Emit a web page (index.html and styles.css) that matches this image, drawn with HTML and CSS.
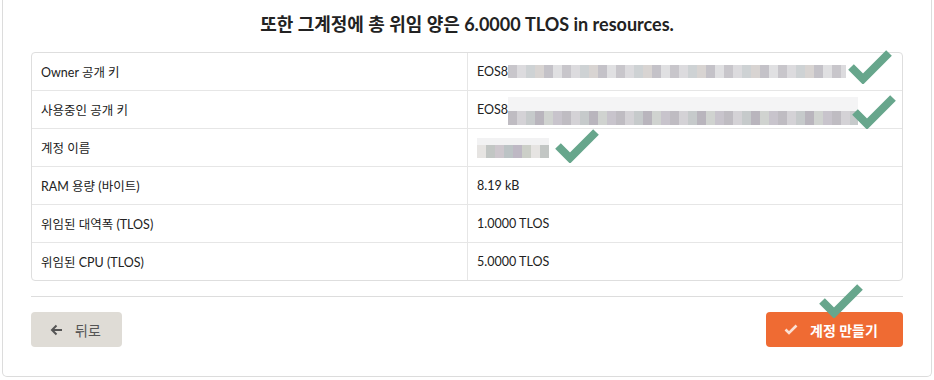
FILE: index.html
```html
<!DOCTYPE html>
<html lang="ko">
<head>
    <meta charset="UTF-8">
    <meta name="viewport" content="width=device-width, initial-scale=1.0">
    <title>계정 만들기</title>
    <link rel="stylesheet" href="styles.css">
</head>
<body>
    <div class="card">
        <h2 class="title">또한 그계정에 총 위임 양은 6.0000 TLOS in resources.</h2>

        <div class="summary">
            <div class="row">
                <div class="cell label">Owner 공개 키</div>
                <div class="cell value">EOS8<span class="blur blur-key"></span></div>
            </div>
            <div class="row">
                <div class="cell label">사용중인 공개 키</div>
                <div class="cell value">EOS8<span class="blur blur-key2"></span></div>
            </div>
            <div class="row">
                <div class="cell label">계정 이름</div>
                <div class="cell value"><span class="blur blur-name"></span></div>
            </div>
            <div class="row">
                <div class="cell label">RAM 용량 (바이트)</div>
                <div class="cell value">8.19 kB</div>
            </div>
            <div class="row">
                <div class="cell label">위임된 대역폭 (TLOS)</div>
                <div class="cell value">1.0000 TLOS</div>
            </div>
            <div class="row">
                <div class="cell label">위임된 CPU (TLOS)</div>
                <div class="cell value">5.0000 TLOS</div>
            </div>
        </div>

        <div class="divider"></div>

        <div class="actions">
            <button class="btn btn-back">
                <svg width="13" height="12" viewBox="0 0 13 12" fill="none" stroke="currentColor" stroke-width="2">
                    <line x1="12" y1="6" x2="2" y2="6"></line>
                    <polyline points="6.5 1.5 2 6 6.5 10.5"></polyline>
                </svg>
                <span>뒤로</span>
            </button>
            <button class="btn btn-create">
                <svg width="14" height="11" viewBox="0 0 14 11" fill="none" stroke="currentColor" stroke-width="2.6">
                    <polyline points="1.5 5.5 5 9 12.5 1.5"></polyline>
                </svg>
                <span>계정 만들기</span>
            </button>
        </div>

        <!-- review marks drawn over the form -->
        <svg class="mark mark-1" viewBox="0 0 44 36"><polyline points="3 19 15 31 41 5"></polyline></svg>
        <svg class="mark mark-2" viewBox="0 0 44 36"><polyline points="3 19 15 31 41 5"></polyline></svg>
        <svg class="mark mark-3" viewBox="0 0 44 36"><polyline points="3 19 15 31 41 5"></polyline></svg>
        <svg class="mark mark-4" viewBox="0 0 44 36"><polyline points="3 19 15 31 41 5"></polyline></svg>
    </div>
</body>
</html>
```

FILE: styles.css
```css
* {
    margin: 0;
    padding: 0;
    box-sizing: border-box;
}

body {
    background-color: #fff;
    color: #222;
    font-family: Lato, 'Noto Sans CJK KR', sans-serif;
}

.card {
    position: relative;
    margin: 0 2px;
    padding: 12px 28px 29px;
    border: 1px solid #dcdcdc;
    border-top: none;
    border-radius: 0 0 5px 5px;
}

.title {
    font-size: 18px;
    font-weight: bold;
    line-height: 24px;
    text-align: center;
    color: #222;
    margin-bottom: 16px;
}

.summary {
    border: 1px solid #dedede;
    border-radius: 4px;
}

.row {
    display: grid;
    grid-template-columns: 435px 1fr;
    height: 38px;
    border-top: 1px solid #e6e6e6;
}

.row:first-child {
    border-top: none;
    height: 37px;
}

.cell {
    display: flex;
    align-items: center;
    padding: 0 10px 0 9px;
    font-size: 12.5px;
    color: #222;
}

.value {
    border-left: 1px solid #e6e6e6;
}

.blur {
    display: inline-block;
    height: 13px;
}

.blur-key {
    width: 338px;
    background: repeating-linear-gradient(90deg, #c8c6cb 0 9px, #dcdbde 9px 18px, #ced2d4 18px 27px, #d8d4d2 27px 36px, #c4c2c8 36px 45px, #e0e0e2 45px 54px);
}

.blur-key2 {
    width: 350px;
    height: 28px;
    margin-top: 3px;
    background:
        linear-gradient(#f4f4f5 0 14px, transparent 14px),
        repeating-linear-gradient(90deg, #bfbcc2 0 9px, #d4d2d6 9px 18px, #c6cacb 18px 27px, #b9b5bd 27px 36px, #d0d3d0 36px 45px, #c8c4cc 45px 54px);
}

.blur-name {
    width: 72px;
    height: 20px;
    background:
        linear-gradient(#f2f2f3 0 7px, transparent 7px),
        repeating-linear-gradient(90deg, #e6e4e2 0 9px, #c2c6c4 9px 18px, #cdc7cd 18px 27px, #bcc3c5 27px 36px, #beb8c4 36px 45px, #cccfc8 45px 54px);
}

.divider {
    height: 1px;
    background-color: #dddddd;
    margin: 15px 0;
}

.actions {
    display: flex;
    justify-content: space-between;
}

.btn {
    display: flex;
    align-items: center;
    gap: 12px;
    height: 35px;
    border: none;
    border-radius: 4px;
    font-family: Lato, 'Noto Sans CJK KR', sans-serif;
    font-size: 14px;
}

.btn-back {
    width: 91px;
    padding-left: 19px;
    background-color: #dfdcd6;
    color: #555;
}

.btn-create {
    width: 137px;
    padding-left: 18px;
    gap: 12px;
    background-color: #ef6b33;
    color: #fff;
    font-weight: bold;
}

.btn-create svg {
    color: #fbe0d4;
}

.mark {
    position: absolute;
    width: 44px;
    height: 36px;
    fill: none;
    stroke: #67a68c;
    stroke-width: 8;
}

.mark-1 { left: 845px; top: 48px; }
.mark-2 { left: 849px; top: 93px; }
.mark-3 { left: 552px; top: 127px; }
.mark-4 { left: 816px; top: 282px; }
```
